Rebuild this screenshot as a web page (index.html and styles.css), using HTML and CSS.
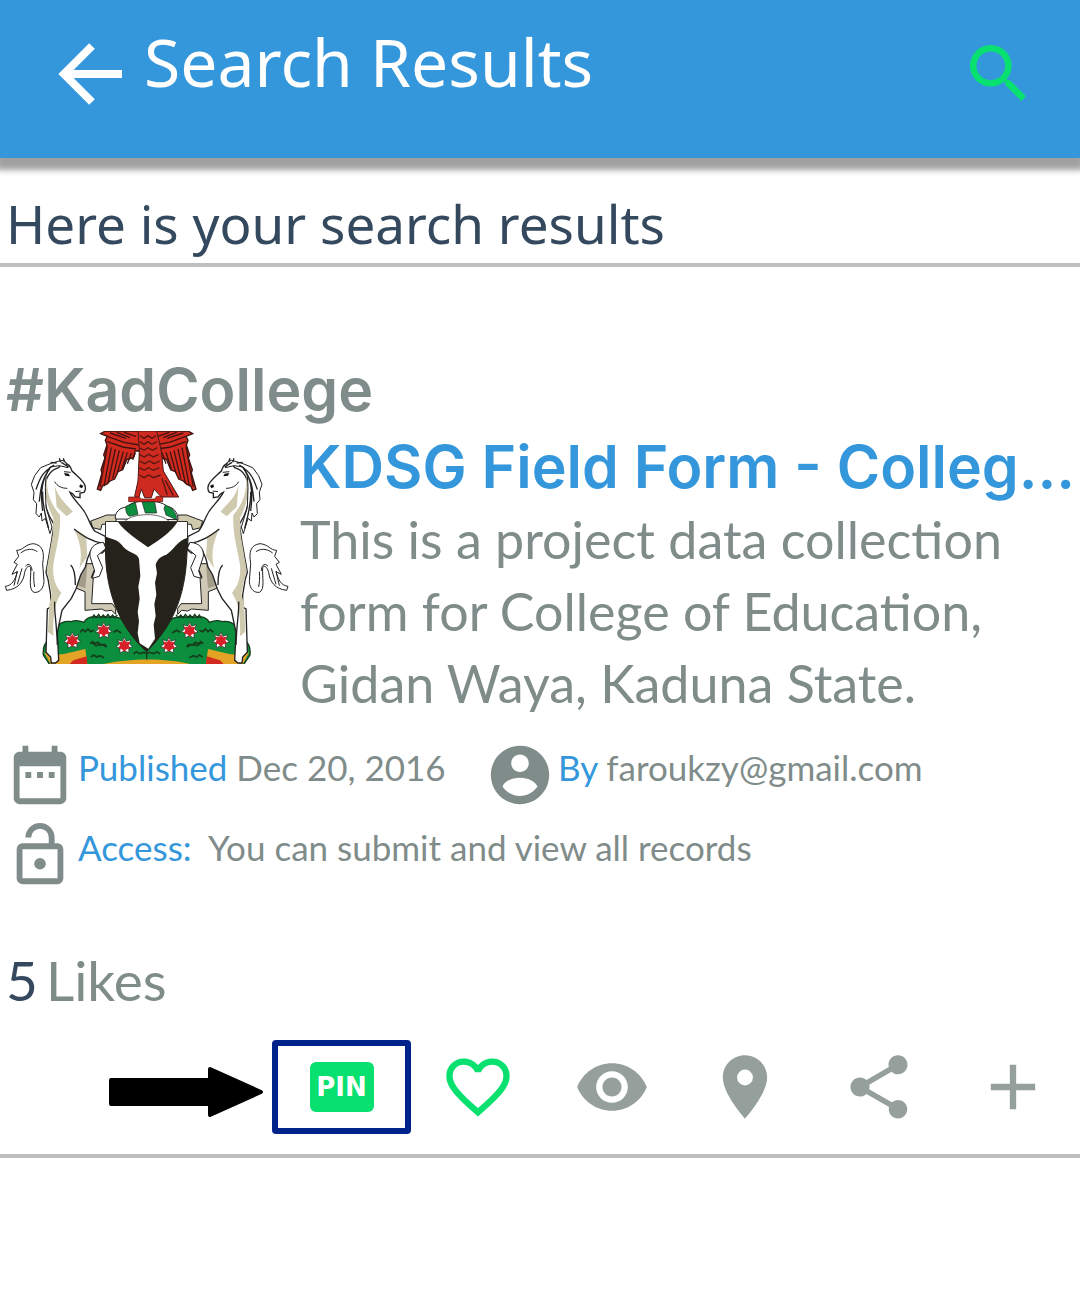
FILE: index.html
```
<!DOCTYPE html>
<html lang="en">

<head>
    <meta charset="UTF-8">
    <meta name="viewport" content="width=device-width, initial-scale=1.0">
    <title>Search Results</title>
    <link rel="stylesheet" href="styles.css">
</head>

<body>
    <header class="topbar">
        <button class="icon-btn" aria-label="Back">
            <svg class="icon-back" viewBox="0 0 64 64"><path d="M64 33H8M34 5L6 33l28 28" fill="none" stroke="#fff" stroke-width="8"/></svg>
        </button>
        <h1>Search Results</h1>
        <button class="icon-btn search" aria-label="Search">
            <svg class="icon-search" viewBox="3 3 17.5 17.5"><path d="M15.5 14h-.79l-.28-.27A6.471 6.471 0 0 0 16 9.5 6.5 6.5 0 1 0 9.5 16c1.61 0 3.09-.59 4.23-1.57l.27.28v.79l5 4.99L20.49 19l-4.99-5zm-6 0C7.01 14 5 11.99 5 9.5S7.01 5 9.5 5 14 7.01 14 9.5 11.99 14 9.5 14z"/></svg>
        </button>
    </header>

    <main>
        <h2 class="intro">Here is your search results</h2>

        <article class="result">
            <p class="tag">#KadCollege</p>

            <div class="summary">
                <svg class="emblem" viewBox="0 18 882 699" role="img" aria-label="Coat of arms">
                    <defs>
                        <g id="flower">
                            <path d="M0-24l6 12 13-5-4 13 10 8-12 4 1 14-14-6-13 7v-14l-12-5 10-8-5-13 14 5z" fill="#fff" stroke="#222" stroke-width="2"/>
                            <path d="M0-18l6 9 11-2-4 11 5 9-11 3-7 8-7-8-11-3 5-9-4-11 11 2z" fill="#d8202b"/>
                        </g>
                        <g id="half">
                            <!-- wing -->
                            <path d="M302 26l14-8h126v60h-36l-6 20-20 6-12 30-14 6-10 22-14 6-10 10-12 4-6 14-10-4 14-48-3-10 12-36-4-8 10-30-5-14 6-12z" fill="#d22a1e" stroke="#3a1410" stroke-width="4"/>
                            <path d="M322 34l50 18 46 8M322 50l46 16 40 6M322 64l-22 122M334 68l-22 116M346 72l-22 102M358 76l-20 84M370 80l-18 64M382 82l-16 50M394 84l-12 32M406 84l-8 20M330 24l48 16M350 22l40 16M372 22l36 12" fill="none" stroke="#401410" stroke-width="4"/>
                            <!-- far forelegs -->
                            <path d="M272 288l22-8 26-10h26l4 12-6 14-38 2-4 16-24-6z" fill="#cfc9ae" stroke="#222" stroke-width="3"/>
                            <path d="M240 416h50v20l-10 20-5 80h62l10 14v18l-12-12-18 2-12-6-50 4V500l-30-12-14-36z" fill="#cfc9b5" stroke="#222" stroke-width="3"/>
                            <path d="M238 420h24l-6 70-30-10-6-24z" fill="#a29c89"/>
                            <!-- grass -->
                            <path d="M130 690c-2-20 4-36 16-44-4-18 8-30 24-34 4-18 26-26 44-22 12-6 28-2 38 2 6-12 20-18 36-16h50c20 0 34 8 40 18l62 80v46H150z" fill="#0b8e3d" stroke="#153a1d" stroke-width="4"/>
                            <path d="M240 622l8-8 8 6 8-8 8 8 10-4M270 656l8-6 6 6 10-4 8 8 12-2 6 8M274 652l14 10 16-4 16 8M272 696l10-6 8 6 10-4 12 6M340 622l10-6 14 8M400 686l10-6 8 6 14-4 8 4" fill="none" stroke="#163d1c" stroke-width="5"/>
                            <path d="M276 580l6-10 6 8 8-10 6 10 8-8 6 8 8-10 6 10 8-8 6 8 8-8" fill="none" stroke="#153a1d" stroke-width="4"/>
                            <path d="M132 682c34 18 82-2 124-10l6 46H152z" fill="#e3a325"/>
                            <path d="M208 718l12-12 40-12 2 24z" fill="#d22a1e"/>
                            <!-- tail -->
                            <path d="M132 470c-2 24-16 34-30 32-18-8-8-46-10-74-6-10-14 0-18 14-4 30-20 50-54 54l-4-12c20-2 30-20 36-44l-16 8 16-30-10-6 14-18-6-18c20 0 24-18 50-20 28 4 34 24 28 60z" fill="#fff" stroke="#222" stroke-width="3"/>
                            <path d="M62 384c18-14 36-14 50-4M52 438l-10 44M66 430l-14 48M102 440c-2 20 0 34 2 46M76 424c12-14 20 0 20 14" fill="none" stroke="#222" stroke-width="3"/>
                            <!-- horse body -->
                            <path d="M188 110c14 4 24 14 28 28 12 12 24 20 34 34 8 10 8 24 2 30l-12 2v14l-14-2-8-10-8-4c10 20 28 36 42 56 14 22 20 46 32 60l32 16 2 40-12 10-34-6-10 24-6 24-14 24-14 42-14 28-28 36-14 66 4 84-10 8h-12l-2-18-14-14 4-130 10-6v-36l-8-48-6-20 16-90 8-54c-20-30-30-60-30-96 2-36 14-66 44-74z" fill="#fff" stroke="#222" stroke-width="4"/>
                            <path d="M142 130c-6 60 4 100 38 140 4 50-14 110-20 150-4 50 14 70 24 84-20 30-26 70-24 130l-16-14 4-84 8-30-16-72 18-104 2-50c-20-40-34-90-22-150zM164 180c10 40 30 50 54 80l-18 14-30-28zM222 312l36 22 4 60-24 36c10-40 4-80-16-118z" fill="#cfc9ae"/>
                            <path d="M212 420c12 10 14 30 14 60M164 530c-2 30 6 60 8 130M222 312c26 20 52 38 90 44l10 14M274 458l8-20 16-2" fill="none" stroke="#222" stroke-width="4"/>
                            <path d="M310 352c-30 2-42 20-40 42l14 44-8 22 22-6 10-26-16-36 26-22z" fill="#fff" stroke="#222" stroke-width="3"/>
                            <path d="M186 106l-30 8-34 14-18 24-10 26 8 24-2 22 10 12-2 30 10 10 6-12 2 24 10-8 14 46 6-20-18-58-2-60 2-36 12-26 28-4 26 6-8-18z" fill="#fff" stroke="#222" stroke-width="3"/>
                            <path d="M162 120c-30 20-40 30-54 74M150 130c-24 30-28 60-32 100M134 158c-12 30-10 70-6 100M128 200c-2 40 8 70 18 110M170 114l-18-2M182 112l-4-12M194 112l-4-12M206 126l-22-14" fill="none" stroke="#222" stroke-width="4"/>
                            <path d="M192 144l14 2 4 8-14-2zM240 178l10 4-4 8-8-4z" fill="#111"/>
                            <path d="M192 140l20 2M164 170c8 14 22 20 38 20M226 200l16-2" fill="none" stroke="#222" stroke-width="3"/>
                            <use href="#flower" x="217" y="646"/>
                            <use href="#flower" x="311" y="616"/>
                            <use href="#flower" x="373" y="661"/>
                        </g>
                    </defs>
                    <use href="#half"/>
                    <use href="#half" transform="translate(880 0) scale(-1 1)"/>
                    <path d="M310 717c80-18 190-18 260 0z" fill="#e3a325"/>
                    <!-- eagle body -->
                    <path d="M414 18h56l14 60 6 60 46 78h-52l-22-24-8 26h-20l-10-26-8 28-12-6 10-46 4-90z" fill="#cf2a1f" stroke="#4a1712" stroke-width="3"/>
                    <path d="M420 32l12 8 12-8 12 8 12-8M420 50l12 8 12-8 12 8 14-8M418 68l14 8 12-8 14 8 14-8M418 88l14 8 14-8 14 8 16-8M420 108l14 8 14-8 14 8 18-8M418 128l14 8 14-8 14 8 18-8M418 150l14 8 14-8 14 8 22-8M486 160l16 50M496 166l24 46" fill="none" stroke="#571811" stroke-width="4"/>
                    <!-- wreath -->
                    <path d="M346 282c-2-22 14-34 34-36 14-14 38-18 60-18s50 4 60 16c20 2 34 18 34 40z" fill="#fff" stroke="#222" stroke-width="3"/>
                    <path d="M378 244l28-12 8 36-26 6c-10-8-12-20-10-30zM426 230h38l6 34h-34zM496 240c22 8 34 24 34 44l-32-14-6-20z" fill="#0b8e3d" stroke="#222" stroke-width="2"/>
                    <path d="M374 290c24-28 112-28 134 0z" fill="#fff" stroke="#222" stroke-width="2"/>
                    <path d="M386 216h32l6 6h40l6-8h18v16H386z" fill="#d22a1e" stroke="#4a1712" stroke-width="2"/>
                    <!-- shield -->
                    <path d="M317 290h245v50c0 130-20 240-122 340-90-80-130-200-123-340z" fill="#24221a" stroke="#24221a" stroke-width="3"/>
                    <path d="M318 291h36c22 30 60 54 90 76 34-22 70-46 88-76h29v48c-28 8-38 34-62 50-20 6-26 14-32 30l4 26-6 28 4 36-6 28 4 36-6 26 4 42-20 30-26-16-6-30 4-36-4-28 6-40-4-36 6-32-4-52c-8-18-28-16-46-34-18-26-32-22-53-32z" fill="#fff"/>
                </svg>
                <div class="summary-text">
                    <h3><a href="#">KDSG Field Form - Colleg...</a></h3>
                    <p>This is a project data collection form for College of Education, Gidan Waya, Kaduna State.</p>
                </div>
            </div>

            <div class="meta">
                <div class="meta-item">
                    <svg class="icon-meta" viewBox="0 0 24 24"><path d="M9 11H7v2h2v-2zm4 0h-2v2h2v-2zm4 0h-2v2h2v-2zm2-7h-1V2h-2v2H8V2H6v2H5c-1.11 0-1.99.9-1.99 2L3 20c0 1.1.89 2 2 2h14c1.1 0 2-.9 2-2V6c0-1.1-.9-2-2-2zm0 16H5V9h14v11z"/></svg>
                    <p><span class="label">Published</span> Dec 20, 2016</p>
                </div>
                <div class="meta-item">
                    <svg class="icon-meta" viewBox="0 0 24 24"><path d="M12 2C6.48 2 2 6.48 2 12s4.48 10 10 10 10-4.48 10-10S17.52 2 12 2zm0 3c1.66 0 3 1.34 3 3s-1.34 3-3 3-3-1.34-3-3 1.34-3 3-3zm0 14.2c-2.5 0-4.71-1.28-6-3.22.6-1.7 3-3.08 6-3.08s5.4 1.38 6 3.08c-1.29 1.94-3.5 3.22-6 3.22z"/></svg>
                    <p><span class="label">By</span> faroukzy@gmail.com</p>
                </div>
                <div class="meta-item wide">
                    <svg class="icon-meta" viewBox="0 0 24 24"><path d="M18 20V10H6v10h12m0-12a2 2 0 0 1 2 2v10a2 2 0 0 1-2 2H6c-1.11 0-2-.9-2-2V10a2 2 0 0 1 2-2h9V6a3 3 0 0 0-6 0H7a5 5 0 0 1 10 0v2h1m-6 9a2 2 0 1 1 0-4 2 2 0 0 1 0 4z"/></svg>
                    <p><span class="label">Access:</span>&nbsp; You can submit and view all records</p>
                </div>
            </div>

            <p class="likes"><span class="count">5</span><span>Likes</span></p>

            <div class="actions">
                <svg class="arrow" viewBox="0 0 155 50"><path d="M2 13h99V2l51 23-51 23V37H2z" stroke="#000" stroke-width="4" stroke-linejoin="round"/></svg>
                <button class="pin"><span>PIN</span></button>
                <button class="action liked" aria-label="Like">
                    <svg viewBox="0 0 24 24"><path d="M16.5 3c-1.74 0-3.41.81-4.5 2.09C10.91 3.81 9.24 3 7.5 3 4.42 3 2 5.42 2 8.5c0 3.78 3.4 6.86 8.55 11.54L12 21.35l1.45-1.32C18.6 15.36 22 12.28 22 8.5 22 5.42 19.58 3 16.5 3zm-4.4 15.55l-.1.1-.1-.1C7.14 14.24 4 11.39 4 8.5 4 6.5 5.5 5 7.5 5c1.54 0 3.04.99 3.57 2.36h1.87C13.46 5.99 14.96 5 16.5 5c2 0 3.5 1.5 3.5 3.5 0 2.89-3.14 5.74-7.9 10.05z"/></svg>
                </button>
                <button class="action" aria-label="View">
                    <svg viewBox="0 0 24 24"><path d="M12 4.5C7 4.5 2.73 7.61 1 12c1.73 4.39 6 7.5 11 7.5s9.27-3.11 11-7.5c-1.73-4.39-6-7.5-11-7.5zM12 17c-2.76 0-5-2.24-5-5s2.24-5 5-5 5 2.24 5 5-2.24 5-5 5zm0-8c-1.66 0-3 1.34-3 3s1.34 3 3 3 3-1.34 3-3-1.34-3-3-3z"/></svg>
                </button>
                <button class="action" aria-label="Location">
                    <svg viewBox="0 0 24 24"><path d="M12 2C8.13 2 5 5.13 5 9c0 5.25 7 13 7 13s7-7.75 7-13c0-3.87-3.13-7-7-7zm0 9.5a2.5 2.5 0 0 1 0-5 2.5 2.5 0 0 1 0 5z"/></svg>
                </button>
                <button class="action" aria-label="Share">
                    <svg viewBox="0 0 24 24"><path d="M18 16.08c-.76 0-1.44.3-1.96.77L8.91 12.7c.05-.23.09-.46.09-.7s-.04-.47-.09-.7l7.05-4.11c.54.5 1.25.81 2.04.81 1.66 0 3-1.34 3-3s-1.34-3-3-3-3 1.34-3 3c0 .24.04.47.09.7L8.04 9.81C7.5 9.31 6.79 9 6 9c-1.66 0-3 1.34-3 3s1.34 3 3 3c.79 0 1.5-.31 2.04-.81l7.12 4.16c-.05.21-.08.43-.08.65 0 1.61 1.31 2.92 2.92 2.92s2.92-1.31 2.92-2.92-1.31-2.92-2.92-2.92z"/></svg>
                </button>
                <button class="action" aria-label="Add">
                    <svg viewBox="0 0 24 24"><path d="M19 13h-6v6h-2v-6H5v-2h6V5h2v6h6v2z"/></svg>
                </button>
            </div>
        </article>
    </main>
</body>

</html>
```
FILE: styles.css
```
body {
    margin: 0;
    font-family: Lato, sans-serif;
    background-color: #fff;
    color: #7f8c8a;
}

h1, h2, h3, p {
    margin: 0;
    font-weight: 400;
}

button {
    border: none;
    padding: 0;
    background: none;
    cursor: pointer;
}

svg {
    display: block;
    flex: none;
}

.topbar {
    display: flex;
    align-items: center;
    box-sizing: border-box;
    height: 158px;
    padding: 0 54px 12px 58px;
    background-color: #3597db;
    box-shadow: 0 8px 6px 4px #a0a0a0;
}

.topbar h1 {
    flex: 1;
    margin-left: 22px;
    padding-bottom: 24px;
    font-family: "Noto Sans", sans-serif;
    font-size: 66px;
    line-height: 80px;
    color: #fff;
}

.icon-back {
    width: 64px;
    height: 64px;
}

.icon-search {
    width: 56px;
    height: 56px;
    fill: #08e070;
}

.intro {
    padding: 26px 6px 0;
    border-bottom: 4px solid #bdbfc1;
    font-family: "Noto Sans", sans-serif;
    font-size: 53px;
    line-height: 79px;
    color: #34495e;
}

.result {
    padding-top: 88px;
    border-bottom: 4px solid #bdbfc1;
}

.tag {
    padding: 0 6px;
    font-family: Inter, sans-serif;
    font-size: 59px;
    font-weight: 600;
    line-height: 70px;
}

.summary {
    display: flex;
    gap: 6px;
    padding-top: 6px;
}

.emblem {
    width: 294px;
    height: 233px;
}

.summary-text {
    flex: 1;
    min-width: 0;
}

.summary-text h3 {
    font-family: Inter, sans-serif;
    font-size: 59px;
    font-weight: 600;
    line-height: 72px;
    white-space: nowrap;
}

.summary-text a {
    color: #3597db;
    text-decoration: none;
}

.summary-text p {
    font-size: 52px;
    line-height: 72px;
}

.meta {
    display: grid;
    grid-template-columns: 480px 1fr;
    row-gap: 10px;
    padding: 21px 5px 0;
}

.meta-item {
    display: flex;
    gap: 3px;
}

.meta-item.wide {
    grid-column: 1 / -1;
}

.meta-item p {
    font-size: 35px;
    line-height: 55px;
    white-space: nowrap;
}

.icon-meta {
    width: 70px;
    height: 70px;
    fill: #7f8c8a;
}

.label {
    color: #3597db;
}

.likes {
    display: flex;
    gap: 8px;
    padding: 52px 6px 22px;
    font-size: 55px;
    line-height: 76px;
}

.count {
    color: #34495e;
}

.actions {
    display: flex;
    align-items: center;
    padding: 0 0 20px 109px;
}

.arrow {
    width: 155px;
    height: 50px;
    margin: 10px 8px 0 0;
}

.pin {
    box-sizing: border-box;
    width: 139px;
    height: 94px;
    border: 6px solid #00238b;
    border-radius: 4px;
}

.pin span {
    display: inline-block;
    width: 64px;
    border-radius: 6px;
    background-color: #08e070;
    font-family: "DejaVu Sans", sans-serif;
    font-size: 26px;
    font-weight: 700;
    line-height: 50px;
    color: #fff;
}

.action {
    display: flex;
    flex: 1;
    justify-content: center;
}

.action svg {
    width: 76px;
    height: 76px;
    fill: #95a09d;
}

.action.liked svg {
    fill: #08e070;
}
```
